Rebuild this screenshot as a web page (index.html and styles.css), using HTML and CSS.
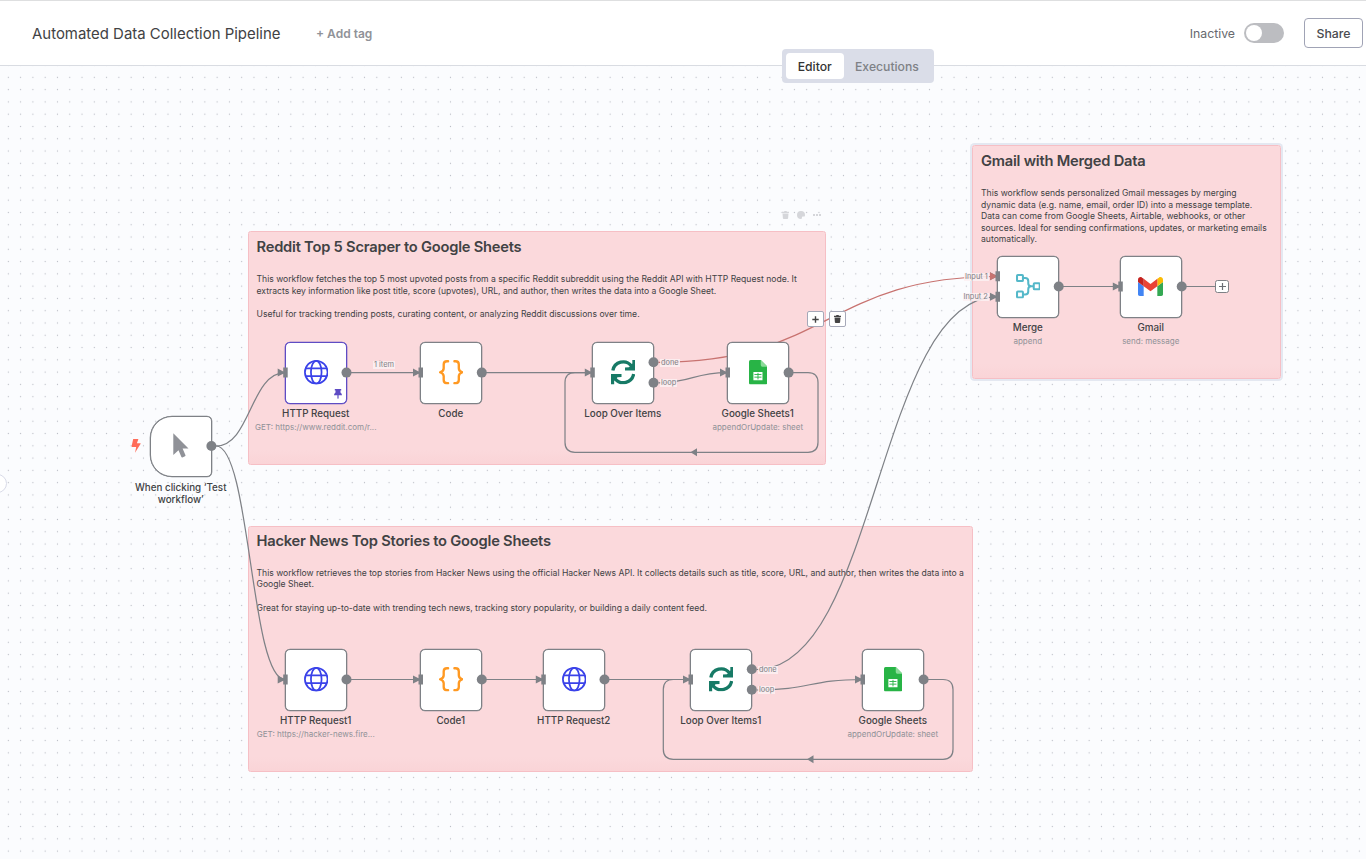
FILE: index.html
```html
<!DOCTYPE html>
<html lang="en">
<head>
<meta charset="utf-8">
<title>Automated Data Collection Pipeline</title>
<link rel="stylesheet" href="styles.css">
</head>
<body>
<svg class="defs" width="0" height="0">
  <symbol id="globe" viewBox="0 0 24 24"><g fill="none" stroke="#3a42e9" stroke-width="1.7"><circle cx="12" cy="12" r="11.1"/><ellipse cx="12" cy="12" rx="5.2" ry="11.1"/><path d="M1.5 8.3h21M1.5 15.7h21"/></g></symbol>
  <symbol id="braces" viewBox="0 0 24 24"><g fill="none" stroke="#ff9922" stroke-width="2.3" stroke-linecap="round" stroke-linejoin="round"><path d="M8.9 1.2H7.8Q4.6 1.2 4.6 4.4V8Q4.6 10.8 1.1 12Q4.6 13.2 4.6 16v3.6q0 3.2 3.2 3.2h1.1"/><path d="M15.1 1.2h1.1q3.2 0 3.2 3.2V8q0 2.800 3.500 4q-3.500 1.200-3.500 4v3.600q0 3.200-3.200 3.200h-1.100"/></g></symbol>
  <symbol id="loop" viewBox="0 0 24 24"><g fill="none" stroke="#177a66" stroke-width="3.200"><path d="M1.800 10.300A10.300 10.300 0 0 1 20 5.700"/><path d="M22.200 13.700A10.300 10.300 0 0 1 4 18.300"/></g><g fill="#177a66"><path d="M24 0v10.300H13.700v-3l3.900-.2 3.300-3.700V0z"/><path d="M0 24V13.700H10.300v3l-3.900.2-3.300 3.700V24z"/></g></symbol>
  <symbol id="sheets" viewBox="0 0 18 24"><path fill="#28b446" d="M1.500 0H11.500L18 6.500V22.500Q18 24 16.500 24H1.500Q0 24 0 22.500V1.500Q0 0 1.500 0Z"/><path fill="#8bdb99" d="M11.500 0L18 6.500H13Q11.500 6.500 11.500 5Z"/><path fill="#fff" d="M4.300 11.700H13.200V19.800H4.300Z"/><path d="M5.300 14.200H12.200M5.300 16.800H12.200M8.800 12.600V19" stroke="#28b446" stroke-width=".9"/></symbol>
  <symbol id="pointer" viewBox="0 0 16 25"><path fill="#909298" d="M.3.300 15.500 15.400H9.600L12.500 22.300Q12.700 23 12 23.300L9.400 24.400Q8.700 24.600 8.400 24L5.500 17.200.3 22Z"/></symbol>
  <symbol id="merge" viewBox="0 0 24 24"><g fill="none" stroke="#54b8c9" stroke-width="2"><rect x="1" y="1" width="5.800" height="5.800" rx=".8"/><rect x="1" y="17.200" width="5.800" height="5.800" rx=".8"/><rect x="17.400" y="9.100" width="5.800" height="5.800" rx=".8"/><path d="M6.800 3.900H9Q12 3.900 12 6.900V9Q12 12 15 12H17.400M6.800 20.100H9Q12 20.100 12 17.100V15Q12 12 15 12"/></g></symbol>
  <symbol id="gmail" viewBox="52 42 88 66"><path fill="#4285f4" d="M58 108h14V74L52 59v43c0 3.320 2.690 6 6 6"/><path fill="#34a853" d="M120 108h14c3.320 0 6-2.690 6-6V59l-20 15"/><path fill="#fbbc04" d="M120 48v26l20-15v-8c0-7.420-8.470-11.650-14.400-7.200"/><path fill="#ea4335" d="M72 74V48l24 18 24-18v26L96 92"/><path fill="#c5221f" d="M52 51v8l20 15V48l-5.600-4.200c-5.940-4.450-14.400-.22-14.400 7.200"/></symbol>
  <symbol id="trash" viewBox="0 0 14 16"><path fill="currentColor" d="M0 1.500H4L5 0H9L10 1.500H14V3.800H0ZM1 5H13L12.200 14.500Q12 16 10.600 16H3.400Q2 16 1.800 14.500Z"/></symbol>
</svg>

<header class="topbar">
  <h1 class="wf-name">Automated Data Collection Pipeline</h1>
  <span class="add-tag">+ Add tag</span>
  <div class="actions">
    <span class="status">Inactive</span>
    <span class="switch"></span>
    <button class="share">Share</button>
  </div>
</header>
<nav class="tabs"><span class="tab active">Editor</span><span class="tab">Executions</span></nav>

<main class="canvas">
  <svg class="dots" width="1366" height="859"><defs><pattern id="grid" x="2.200" y="71.200" width="12.282" height="12.282" patternUnits="userSpaceOnUse"><circle cx="6.140" cy="6.140" r=".62" fill="#b9bcc4"/></pattern></defs><rect width="1366" height="859" fill="url(#grid)"/></svg>

  <section class="sticky s-reddit">
    <h2>Reddit Top 5 Scraper to Google Sheets</h2>
    <p>This workflow fetches the top 5 most upvoted posts from a specific Reddit subreddit using the Reddit API with HTTP Request node. It<br>extracts key information like post title, score (upvotes), URL, and author, then writes the data into a Google Sheet.</p>
    <p>Useful for tracking trending posts, curating content, or analyzing Reddit discussions over time.</p>
  </section>
  <section class="sticky s-hacker">
    <h2>Hacker News Top Stories to Google Sheets</h2>
    <p>This workflow retrieves the top stories from Hacker News using the official Hacker News API. It collects details such as title, score, URL, and author, then writes the data into a<br>Google Sheet.</p>
    <p>Great for staying up-to-date with trending tech news, tracking story popularity, or building a daily content feed.</p>
  </section>
  <section class="sticky s-gmail">
    <h2>Gmail with Merged Data</h2>
    <p>This workflow sends personalized Gmail messages by merging<br>dynamic data (e.g. name, email, order ID) into a message template.<br>Data can come from Google Sheets, Airtable, webhooks, or other<br>sources. Ideal for sending confirmations, updates, or marketing emails<br>automatically.</p>
  </section>
  <div class="sticky-tools">
    <svg width="7" height="8"><use href="#trash"/></svg>
    <svg width="8" height="8" viewBox="0 0 16 16"><path fill="currentColor" fill-rule="evenodd" d="M8 0a8 8 0 1 0 0 16q2 0 1.700-2.200Q9.400 11 12 11h2.500Q16 11 16 8A8 8 0 0 0 8 0Z"/></svg>
    <svg width="8" height="8" viewBox="0 0 8 8"><path fill="currentColor" d="M0 3h2v2H0zM3 3h2v2H3zM6 3h2v2H6z"/></svg>
  </div>

  <svg class="edges" width="1366" height="859" viewBox="0 0 1366 859">
    <g fill="none" stroke="#7e8186" stroke-width="1.230">
      <path d="M216 446C250.500 446 250.500 372.600 285 372.600"/>
      <path d="M216 446C250.500 446 250.500 679.500 285 679.500"/>
      <path d="M346.500 372.600H418M481.800 372.600H589M346.500 679.500H418M481.800 679.500H540M604.500 679.500H688"/>
      <path d="M658.500 382.800C692.700 382.800 692.700 372.600 727 372.600"/>
      <path d="M756.800 690C809.600 690 809.600 679.500 862.500 679.500"/>
      <path d="M788.600 372.600H808Q818 372.600 818 382.600V442.300Q818 452.300 808 452.300H575Q565 452.300 565 442.300V382.600Q565 372.600 575 372.600H590"/>
      <path d="M923.600 679.500H943Q953 679.500 953 689.500V749.300Q953 759.300 943 759.300H673.300Q663.300 759.300 663.300 749.300V689.500Q663.300 679.500 673.300 679.500H688"/>
      <path d="M756.800 669.500C877.200 669.500 877.200 296.700 997.500 296.700"/>
      <path d="M1058.700 286.500H1118M1181.700 286.500H1216"/>
      <path stroke="#c87370" d="M658.500 362.300C828 362.300 828 276.500 997.500 276.500"/>
    </g>
    <g fill="#7e8186"><path d="M690.500 452.300l6.500-4v8zM807 759.300l6.500-4v8z"/></g>
  </svg>

  <span class="edge-label l-item">1 item</span>
  <span class="edge-label l-done">done</span><span class="edge-label l-loop">loop</span>
  <span class="edge-label l-done1">done</span><span class="edge-label l-loop1">loop</span>
  <span class="edge-label l-in1">Input 1</span><span class="edge-label l-in2">Input 2</span>

  <svg class="bolt" width="10" height="14" viewBox="0 0 10 14"><path fill="#ff6d5a" d="M2.200 0H7.400L5.900 4.300H9.400Q9.900 4.300 9.500 5L4 13.700 5.200 8H1.200Q.5 8 .6 7.200Z"/></svg>

  <div class="node trigger n-start"><svg width="16" height="25"><use href="#pointer"/></svg><b class="title">When clicking ‘Test workflow’</b></div>
  <div class="node pinned n-http"><svg width="24.500" height="24.500"><use href="#globe"/></svg><svg class="pin" width="8" height="10" viewBox="0 0 8 10"><path fill="#5e4cc4" d="M.8 0H7.200V1.600H6.400L6.600 3.800Q8 4.600 8 6.300H4.600V9.200L4 10 3.400 9.200V6.300H0Q0 4.600 1.400 3.800L1.600 1.600H.8Z"/></svg><b class="title">HTTP Request</b><span class="sub">GET: https://www.reddit.com/r...</span></div>
  <div class="node n-code"><svg width="24.500" height="24.500"><use href="#braces"/></svg><b class="title">Code</b></div>
  <div class="node n-loop"><svg width="24.500" height="24.500"><use href="#loop"/></svg><b class="title">Loop Over Items</b></div>
  <div class="node n-sheet1"><svg width="18.400" height="24.500"><use href="#sheets"/></svg><b class="title">Google Sheets1</b><span class="sub">appendOrUpdate: sheet</span></div>
  <div class="node n-http1"><svg width="24.500" height="24.500"><use href="#globe"/></svg><b class="title">HTTP Request1</b><span class="sub">GET: https://hacker-news.fire...</span></div>
  <div class="node n-code1"><svg width="24.500" height="24.500"><use href="#braces"/></svg><b class="title">Code1</b></div>
  <div class="node n-http2"><svg width="24.500" height="24.500"><use href="#globe"/></svg><b class="title">HTTP Request2</b></div>
  <div class="node n-loop1"><svg width="24.500" height="24.500"><use href="#loop"/></svg><b class="title">Loop Over Items1</b></div>
  <div class="node n-sheet"><svg width="18.400" height="24.500"><use href="#sheets"/></svg><b class="title">Google Sheets</b><span class="sub">appendOrUpdate: sheet</span></div>
  <div class="node n-merge"><svg width="24.500" height="24.500"><use href="#merge"/></svg><b class="title">Merge</b><span class="sub">append</span></div>
  <div class="node n-gmail"><svg width="25" height="19"><use href="#gmail"/></svg><b class="title">Gmail</b><span class="sub">send: message</span></div>

  <svg class="handles" width="1366" height="859" viewBox="0 0 1366 859">
    <defs><path id="port" d="M5.500 -5H10V5H5.500V1.200L0 4V-4L5.500 -1.200Z"/></defs>
    <g fill="#7e8186">
      <circle cx="211.400" cy="446" r="5"/><circle cx="346.500" cy="372.600" r="5"/><circle cx="481.800" cy="372.600" r="5"/><circle cx="653.500" cy="362.200" r="5"/><circle cx="653.500" cy="382.800" r="5"/><circle cx="788.600" cy="372.600" r="5"/>
      <circle cx="346.500" cy="679.500" r="5"/><circle cx="481.800" cy="679.500" r="5"/><circle cx="604.500" cy="679.500" r="5"/><circle cx="751.800" cy="669.200" r="5"/><circle cx="751.800" cy="689.800" r="5"/><circle cx="923.600" cy="679.500" r="5"/>
      <circle cx="1058.700" cy="286.500" r="5"/><circle cx="1181.700" cy="286.500" r="5"/>
      <use href="#port" x="277.700" y="372.600"/><use href="#port" x="413" y="372.600"/><use href="#port" x="584.800" y="372.600"/><use href="#port" x="720" y="372.600"/>
      <use href="#port" x="277.700" y="679.500"/><use href="#port" x="413" y="679.500"/><use href="#port" x="535.800" y="679.500"/><use href="#port" x="683" y="679.500"/><use href="#port" x="855" y="679.500"/>
      <use href="#port" x="990" y="276.200"/><use href="#port" x="990" y="296.700"/><use href="#port" x="1112.800" y="286.500"/>
    </g>
    <path fill="#c87370" d="M990 272.200l5.500 3v2l-5.500 3z"/>
  </svg>

  <span class="add-next"><svg width="7" height="7" viewBox="0 0 7 7"><path d="M3.500 0v7M0 3.500h7" stroke="#6b6e74" stroke-width="1.200"/></svg></span>
  <div class="edge-tools">
    <span class="tool"><svg width="7" height="7" viewBox="0 0 7 7"><path d="M3.500 .3v6.400M.3 3.500h6.400" stroke="#444" stroke-width="1.400"/></svg></span>
    <span class="tool"><svg width="7" height="8"><use href="#trash"/></svg></span>
  </div>
  <span class="edge-knob"></span>
</main>
</body>
</html>
```
FILE: styles.css
```css
* { box-sizing: border-box; }
body { margin: 0; width: 1366px; height: 859px; overflow: hidden; position: relative; font-family: Inter, "Liberation Sans", sans-serif; color: #414244; background: #fbfcfe; }
.defs { position: absolute; }

.topbar { position: relative; z-index: 5; display: flex; align-items: center; height: 66px; padding: 1px 3px 0 32px; background: #fff; border-top: 1px solid #dedfe0; border-bottom: 1px solid #d9dce2; }
.wf-name { margin: 0; width: 284px; font-size: 14.950px; font-weight: 400; white-space: nowrap; }
.add-tag { font-size: 12px; font-weight: 600; color: #909298; }
.actions { display: flex; align-items: center; margin-left: auto; margin-top: -1px; }
.status { font-size: 12.300px; padding-top: 1px; color: #67696e; }
.switch { width: 40px; height: 20px; margin: 0 20px 0 9px; border-radius: 10px; background: #bcbdc1; padding: 2px; }
.switch::before { content: ""; display: block; width: 16px; height: 16px; border-radius: 50%; background: #fff; }
.share { width: 59px; height: 30px; padding: 0; border: 1px solid #a0a3b5; border-radius: 4px; background: #fff; font: 500 12.300px Inter, sans-serif; color: #4a4b50; }

.tabs { position: absolute; z-index: 6; left: 782px; top: 49px; width: 152px; height: 34px; display: flex; padding: 4px; border-radius: 4px; background: #dadde8; }
.tab { display: flex; align-items: center; padding: 0 11.500px; font-size: 12.200px; font-weight: 500; color: #7e8186; }
.tab.active { flex: none; width: 57.500px; padding: 0; justify-content: center; border-radius: 4px; background: #fff; color: #333; }

.canvas { position: absolute; inset: 0; }
.dots, .edges, .handles { position: absolute; left: 0; top: 0; }
.edges, .handles { pointer-events: none; }

.sticky { position: absolute; padding: 6px 7.500px; border: 1px solid #f6bfc5; border-radius: 2.500px; background: linear-gradient(#fbd9dc 0, #fbd9dc calc(100% - 14px), #fad4d7 100%); }
.sticky h2 { margin: 0 0 18px; font-size: 14.700px; line-height: 18px; font-weight: 600; letter-spacing: -.220px; white-space: nowrap; }
.sticky p { margin: 0 0 12px; font-size: 8.600px; line-height: 11.600px; white-space: nowrap; }
.s-reddit { left: 248px; top: 231px; width: 578px; height: 234px; }
.s-hacker { left: 248px; top: 525.500px; width: 725px; height: 246.500px; }
.s-hacker h2 { margin: -1px 0 18.400px; }
.s-gmail { left: 972px; top: 145px; width: 308.500px; height: 234px; padding-left: 8px; box-shadow: 0 0 0 2px #e4e8f1; }
.sticky-tools { position: absolute; left: 782px; top: 211px; display: flex; gap: 8px; color: #d5d6da; }

.edge-label { position: absolute; padding: 0 1px; font-size: 7.400px; line-height: 8px; color: #7e8186; background: rgba(251, 240, 242, .85); white-space: nowrap; }
.l-item { left: 373px; top: 361px; }
.l-done { left: 660px; top: 359px; }
.l-loop { left: 660px; top: 379px; }
.l-done1 { left: 758px; top: 666px; }
.l-loop1 { left: 758px; top: 686px; }
.l-in1 { left: 964px; top: 273px; }
.l-in2 { left: 962.500px; top: 293px; }

.bolt { position: absolute; left: 131px; top: 439px; }
.node { position: absolute; width: 61.500px; height: 61.500px; display: flex; align-items: center; justify-content: center; border: 1.230px solid #7e8186; border-radius: 5px; background: #fff; box-shadow: 0 0 0 .300px #7e8186; }
.node > svg:first-child { margin-top: -1px; }
.node.trigger { border-radius: 22px 5px 5px 22px; }
.node.pinned { border-color: #5e4cc4; box-shadow: 0 0 0 .300px #5e4cc4; }
.title { position: absolute; top: 65px; left: 50%; transform: translateX(-50%); font-size: 9.800px; line-height: 12.800px; font-weight: 500; text-align: center; white-space: nowrap; }
.trigger .title { width: 100px; white-space: normal; }
.sub { position: absolute; top: 79px; left: 50%; transform: translateX(-50%); font-size: 8px; line-height: 11px; color: #909298; white-space: nowrap; }
.pin { position: absolute; right: 4px; bottom: 4px; }
.n-start { left: 150px; top: 415.500px; }
.n-http { left: 285px; top: 342px; }
.n-code { left: 420px; top: 342px; }
.n-loop { left: 592px; top: 342px; }
.n-sheet1 { left: 727px; top: 342px; }
.n-http1 { left: 285px; top: 649px; }
.n-code1 { left: 420px; top: 649px; }
.n-http2 { left: 543px; top: 649px; }
.n-loop1 { left: 690px; top: 649px; }
.n-sheet { left: 862px; top: 649px; }
.n-merge { left: 997px; top: 256px; }
.n-gmail { left: 1120px; top: 256px; }

.add-next { position: absolute; left: 1215px; top: 280px; width: 14px; height: 13px; display: flex; align-items: center; justify-content: center; border: 1.200px solid #7e8186; border-radius: 2.500px; background: #fff; }
.edge-tools { position: absolute; left: 807px; top: 311px; display: flex; gap: 5px; color: #444; }
.tool { width: 17px; height: 16px; display: flex; align-items: center; justify-content: center; border: 1px solid #a5a8b8; border-radius: 2px; background: #fff; }
.edge-knob { position: absolute; left: -12px; top: 474px; width: 19px; height: 19px; border: 1px solid #d9dbe8; border-radius: 50%; background: #fff; }
```
